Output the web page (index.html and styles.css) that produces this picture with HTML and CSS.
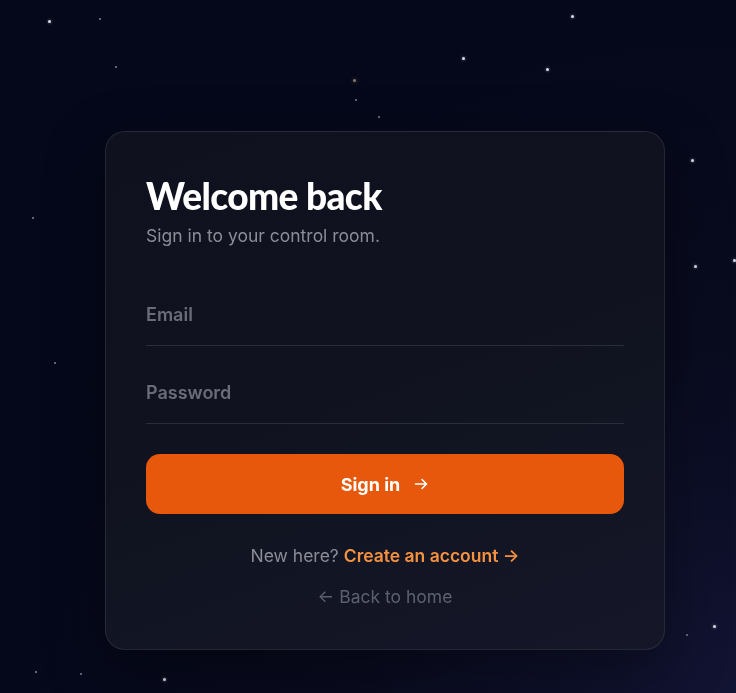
FILE: index.html
```html
<!DOCTYPE html>
<html>
<head>
  <meta charset="utf-8">
  <meta name="viewport" content="width=device-width, initial-scale=1.0">
  <title>Sign in</title>
  <link rel="stylesheet" href="styles.css">
</head>
<body>

<!-- star field -->
<div class="stars">
  <span class="star" style="left:48px;top:20px"></span>
  <span class="star dim" style="left:99px;top:18px"></span>
  <span class="star dim" style="left:115px;top:66px"></span>
  <span class="star warm" style="left:353px;top:79px"></span>
  <span class="star dim" style="left:355px;top:99px"></span>
  <span class="star dim" style="left:378px;top:116px"></span>
  <span class="star" style="left:462px;top:57px"></span>
  <span class="star" style="left:546px;top:68px"></span>
  <span class="star" style="left:571px;top:15px"></span>
  <span class="star" style="left:691px;top:159px"></span>
  <span class="star dim" style="left:32px;top:217px"></span>
  <span class="star" style="left:694px;top:265px"></span>
  <span class="star" style="left:733px;top:259px"></span>
  <span class="star dim" style="left:54px;top:362px"></span>
  <span class="star" style="left:713px;top:625px"></span>
  <span class="star dim" style="left:686px;top:634px"></span>
  <span class="star dim" style="left:35px;top:671px"></span>
  <span class="star" style="left:163px;top:678px"></span>
  <span class="star dim" style="left:80px;top:673px"></span>
</div>

<div class="page">
  <form class="card" onsubmit="return false">
    <h1 class="title">Welcome back</h1>
    <p class="subtitle">Sign in to your control room.</p>

    <div class="fields">
      <input class="field" type="email" placeholder="Email">
      <input class="field" type="password" placeholder="Password">
    </div>

    <button class="btn" type="submit">
      Sign in
      <svg width="16" height="16" viewBox="0 0 16 16" fill="none" stroke="currentColor" stroke-width="1.6" stroke-linecap="round" stroke-linejoin="round"><path d="M2.5 8h11M9 3.5 13.5 8 9 12.5"/></svg>
    </button>

    <p class="signup">New here? <a href="#">Create an account &rarr;</a></p>
    <p class="back"><a href="#">&larr; Back to home</a></p>
  </form>
</div>

</body>
</html>
```

FILE: styles.css
```css
html, body {
  margin: 0;
  padding: 0;
  height: 100%;
}

body {
  font-family: Inter, "Noto Sans", sans-serif;
  background: radial-gradient(ellipse at 100% 100%, #121433 0%, #090b1f 35%, #05081a 70%), #05081a;
  color: #fff;
  overflow: hidden;
}

.stars {
  position: fixed;
  inset: 0;
}

.star {
  position: absolute;
  width: 3px;
  height: 3px;
  border-radius: 50%;
  background: #d7dbe6;
  box-shadow: 0 0 3px rgba(220, 225, 240, 0.6);
}

.star.dim {
  width: 2px;
  height: 2px;
  background: #7f8596;
  box-shadow: none;
}

.star.warm {
  background: #8a7a66;
  box-shadow: 0 0 4px rgba(200, 170, 130, 0.5);
}

.page {
  position: relative;
  padding: 131px 0 0 105px;
}

.card {
  width: 478px;
  padding: 44px 40px 40px 40px;
  border: 1px solid rgba(255, 255, 255, 0.09);
  border-radius: 20px;
  background: linear-gradient(160deg, #0f121e 0%, #10131f 50%, #151729 100%);
  box-shadow: 0 20px 60px rgba(0, 0, 0, 0.35);
}

.title {
  margin: 0;
  font-family: Lato, sans-serif;
  font-weight: 900;
  font-size: 37px;
  line-height: 40px;
  letter-spacing: -0.6px;
  color: #fff;
}

.subtitle {
  margin: 8px 0 0 0;
  font-size: 17.5px;
  line-height: 24px;
  color: #8a8d98;
}

.fields {
  margin-top: 20px;
}

.field {
  display: block;
  width: 100%;
  box-sizing: border-box;
  padding: 35px 0 18px 0;
  border: none;
  border-bottom: 1px solid #2a2d3a;
  background: transparent;
  font-family: Inter, sans-serif;
  font-size: 18px;
  line-height: 24px;
  font-weight: 600;
  color: #fff;
  outline: none;
}

.field::placeholder {
  color: #6a6d79;
}

.btn {
  display: flex;
  align-items: center;
  justify-content: center;
  gap: 13px;
  width: 100%;
  height: 60px;
  margin-top: 30px;
  border: none;
  border-radius: 14px;
  background: #e8580c;
  color: #fff;
  font-family: Inter, sans-serif;
  font-size: 18px;
  font-weight: 700;
  cursor: pointer;
}

.signup, .back {
  margin: 0;
  text-align: center;
  font-size: 17.5px;
  line-height: 24px;
}

.signup {
  margin-top: 30px;
  color: #8a8d98;
}

.signup a {
  color: #f5913f;
  font-weight: 600;
  text-decoration: none;
}

.back {
  margin-top: 17px;
}

.back a {
  color: #5d606e;
  text-decoration: none;
}
```
